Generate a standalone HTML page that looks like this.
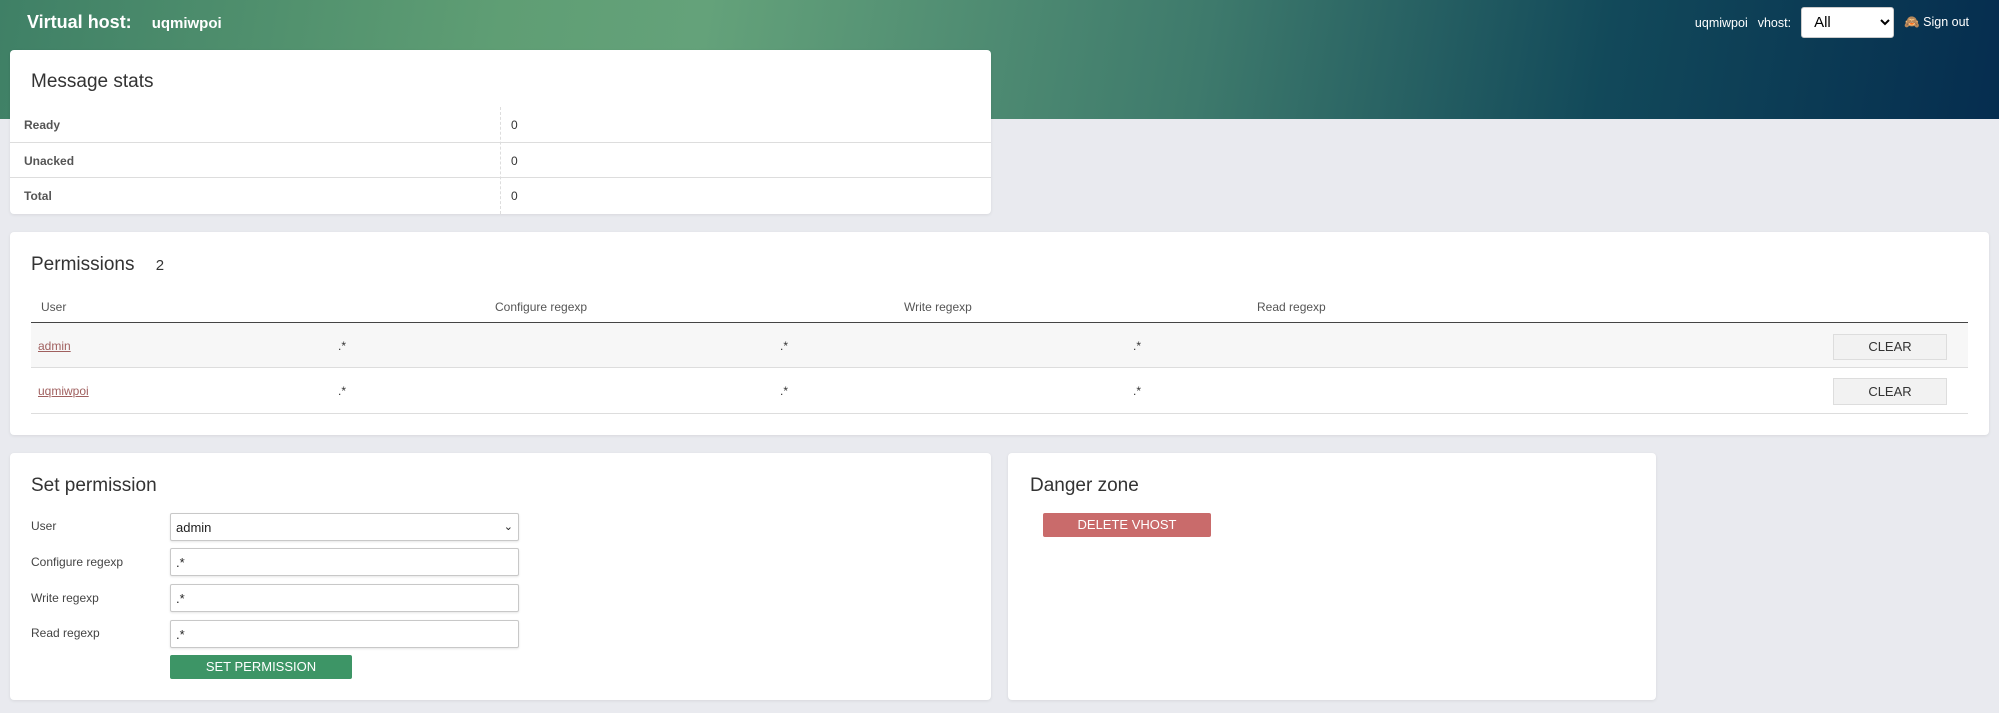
<!DOCTYPE html>
<html><head><meta charset="utf-8"><style>
*{box-sizing:border-box;margin:0;padding:0}
body{width:1999px;height:713px;background:#e9eaef;font-family:"Liberation Sans",sans-serif;color:#333;position:relative;overflow:hidden}
.hdr{position:absolute;left:0;top:0;width:1999px;height:119px;background:linear-gradient(100deg,#3f8066 0%,#5f9e74 25%,#64a27a 35%,#3e7a6c 60%,#12495a 80%,#052d4f 100%)}
.hdr .t{position:absolute;left:27px;top:12px;color:#fff;font-weight:bold;font-size:18px}
.hdr .t span{font-size:15px;margin-left:20px}
.hdr .r{position:absolute;right:30px;top:7px;color:#fff;font-size:12.5px;display:flex;align-items:center;gap:10px}
.hdr select{width:93px;height:31px;font-size:15px;border-radius:3px;border:1px solid #ccc;background:#fff;padding-left:8px}
.card{position:absolute;background:#fff;border-radius:4px;box-shadow:0 1px 3px rgba(0,0,0,.08)}
.card h2{position:absolute;font-size:19px;font-weight:normal;color:#333}
.row{position:absolute;left:0;right:0;font-size:12px}
.lbl{position:absolute;font-size:12px;color:#444}
.inp{position:absolute;left:170px;width:349px;height:28px;border:1px solid #c8c8c8;border-radius:2px;font-size:13px;padding:6px 5px;color:#222;box-shadow:0 1px 2px rgba(0,0,0,.1)}
.btn{position:absolute;color:#fff;font-size:13px;text-align:center;border-radius:2px}
a{color:#a0605f;text-decoration:underline}
</style></head><body>
<div class="hdr"><div class="t">Virtual host:<span>uqmiwpoi</span></div>
<div class="r"><span>uqmiwpoi</span><span>vhost:</span><select><option>All</option></select><span>🙈 Sign out</span></div></div>

<div class="card" style="left:10px;top:50px;width:981px;height:164px">
<h2 style="left:21px;top:21px">Message stats</h2>
<div style="position:absolute;left:490px;top:57px;bottom:0;border-left:1px dashed #ddd"></div>
<div class="row" style="top:57px;height:36px;border-bottom:1px solid #ddd"><b style="position:absolute;left:14px;top:11px;color:#555">Ready</b><span style="position:absolute;left:501px;top:11px">0</span></div>
<div class="row" style="top:93px;height:35px;border-bottom:1px solid #ddd"><b style="position:absolute;left:14px;top:11px;color:#555">Unacked</b><span style="position:absolute;left:501px;top:11px">0</span></div>
<div class="row" style="top:128px;height:36px"><b style="position:absolute;left:14px;top:11px;color:#555">Total</b><span style="position:absolute;left:501px;top:11px">0</span></div>
</div>

<div class="card" style="left:10px;top:232px;width:1979px;height:203px">
<h2 style="left:21px;top:22px">Permissions <span style="font-size:15px;margin-left:16px">2</span></h2>
<div class="row" style="left:21px;right:21px;top:68px;height:23px;border-bottom:1px solid #444;color:#555">
<span style="position:absolute;left:10px">User</span><span style="position:absolute;left:464px">Configure regexp</span><span style="position:absolute;left:873px">Write regexp</span><span style="position:absolute;left:1226px">Read regexp</span></div>
<div class="row" style="left:21px;right:21px;top:91px;height:45px;background:#f7f7f7;border-bottom:1px solid #ddd">
<a style="position:absolute;left:7px;top:16px">admin</a><span style="position:absolute;left:307px;top:16px">.*</span><span style="position:absolute;left:749px;top:16px">.*</span><span style="position:absolute;left:1102px;top:16px">.*</span>
<div style="position:absolute;left:1802px;top:11px;width:114px;height:26px;border:1px solid #ddd;background:#f2f2f2;text-align:center;line-height:24px;font-size:13px">CLEAR</div></div>
<div class="row" style="left:21px;right:21px;top:136px;height:46px;border-bottom:1px solid #ddd">
<a style="position:absolute;left:7px;top:16px">uqmiwpoi</a><span style="position:absolute;left:307px;top:16px">.*</span><span style="position:absolute;left:749px;top:16px">.*</span><span style="position:absolute;left:1102px;top:16px">.*</span>
<div style="position:absolute;left:1802px;top:10px;width:114px;height:27px;border:1px solid #ddd;background:#f2f2f2;text-align:center;line-height:25px;font-size:13px">CLEAR</div></div>
</div>

<div class="card" style="left:10px;top:453px;width:981px;height:247px">
<h2 style="left:21px;top:22px">Set permission</h2>
<span class="lbl" style="left:21px;top:66px">User</span>
<span class="lbl" style="left:21px;top:102px">Configure regexp</span>
<span class="lbl" style="left:21px;top:138px">Write regexp</span>
<span class="lbl" style="left:21px;top:173px">Read regexp</span>
</div>
<div class="inp" style="top:513px">admin<span style="float:right;font-size:11px">⌄</span></div>
<div class="inp" style="top:548px">.*</div>
<div class="inp" style="top:584px">.*</div>
<div class="inp" style="top:620px">.*</div>
<div class="btn" style="left:170px;top:655px;width:182px;height:24px;line-height:24px;background:#3d9566">SET PERMISSION</div>

<div class="card" style="left:1008px;top:453px;width:648px;height:247px">
<h2 style="left:22px;top:22px">Danger zone</h2>
<div class="btn" style="left:35px;top:60px;width:168px;height:24px;line-height:24px;background:#c96b6b">DELETE VHOST</div>
</div>
</body></html>
